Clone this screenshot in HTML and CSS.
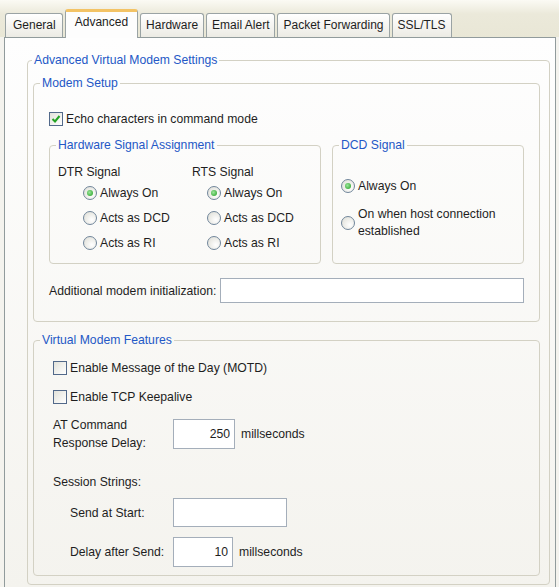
FILE: index.html
```html
<!DOCTYPE html>
<html lang="en">
<head>
  <meta charset="UTF-8" />
  <title>Advanced</title>
  <link rel="stylesheet" href="styles.css">
</head>
<body>

  <div class="tabs">
    <div class="tab">General</div>
    <div class="tab active">Advanced</div>
    <div class="tab">Hardware</div>
    <div class="tab">Email Alert</div>
    <div class="tab">Packet Forwarding</div>
    <div class="tab">SSL/TLS</div>
  </div>

  <div class="panel">
    <fieldset class="group outer">
      <legend>Advanced Virtual Modem Settings</legend>
      <div class="group-body">

        <fieldset class="group setup">
          <legend>Modem Setup</legend>
          <div class="group-body">

            <div class="check-row">
              <span class="checkbox"><svg width="12" height="12" viewBox="0 0 12 12"><polyline points="2.5,6 5,8.5 9.5,3" fill="none" stroke="#23a323" stroke-width="2"/></svg></span>
              Echo characters in command mode
            </div>

            <div class="signals">
              <fieldset class="group hsa">
                <legend>Hardware Signal Assignment</legend>
                <div class="group-body signal-cols">
                  <div class="signal-col dtr">
                    <div class="col-title">DTR Signal</div>
                    <div class="radio-row"><span class="radio on"></span>Always On</div>
                    <div class="radio-row"><span class="radio"></span>Acts as DCD</div>
                    <div class="radio-row"><span class="radio"></span>Acts as RI</div>
                  </div>
                  <div class="signal-col rts">
                    <div class="col-title">RTS Signal</div>
                    <div class="radio-row"><span class="radio on"></span>Always On</div>
                    <div class="radio-row"><span class="radio"></span>Acts as DCD</div>
                    <div class="radio-row"><span class="radio"></span>Acts as RI</div>
                  </div>
                </div>
              </fieldset>

              <fieldset class="group dcd">
                <legend>DCD Signal</legend>
                <div class="group-body">
                  <div class="radio-row"><span class="radio on"></span>Always On</div>
                  <div class="radio-row wrap"><span class="radio"></span><span>On when host connection<br>established</span></div>
                </div>
              </fieldset>
            </div>

            <div class="init-row">
              <span>Additional modem initialization:</span>
              <input class="field init" type="text" value="">
            </div>
          </div>
        </fieldset>

        <fieldset class="group features">
          <legend>Virtual Modem Features</legend>
          <div class="group-body">

            <div class="check-row"><span class="checkbox"></span>Enable Message of the Day (MOTD)</div>
            <div class="check-row keepalive"><span class="checkbox"></span>Enable TCP Keepalive</div>

            <div class="value-row at-row">
              <span class="value-label">AT Command<br>Response Delay:</span>
              <input class="field delay" type="text" value="250">
              <span class="unit">millseconds</span>
            </div>

            <div class="session-title">Session Strings:</div>

            <div class="value-row session send">
              <span class="value-label">Send at Start:</span>
              <input class="field start" type="text" value="">
            </div>

            <div class="value-row session after">
              <span class="value-label">Delay after Send:</span>
              <input class="field short" type="text" value="10">
              <span class="unit">millseconds</span>
            </div>
          </div>
        </fieldset>
      </div>
    </fieldset>
  </div>

</body>
</html>
```

FILE: styles.css
```css
body {
  margin: 0;
  background: #f4f3ee;
  font-family: "Liberation Sans", Arial, sans-serif;
  font-size: 12.2px;
  color: #1e1e1e;
}

/* tab strip */
.tabs {
  display: flex;
  align-items: flex-end;
  height: 37px;
  padding-left: 5px;
  gap: 2px;
  background: linear-gradient(#fbfaf4, #ebe9da 14px, #e9e7d6);
}

.tab {
  height: 23px;
  line-height: 23px;
  padding: 0 5px;
  border: 1px solid #9aa3a4;
  border-bottom: none;
  border-radius: 3px 3px 0 0;
  background: linear-gradient(#ffffff, #ecebe4);
  font-size: 12px;
}

.tab:first-child {
  padding: 0 6px 0 7px;
}

.tab.active {
  position: relative;
  z-index: 1;
  height: 26px;
  line-height: 20px;
  padding: 0 9px;
  margin-bottom: -1px;
  border-top: 3px solid #f3c365;
  background: #fdfdfd;
}

/* tab page */
.panel {
  margin: 0 3px 0 4px;
  padding: 14px 5px 2px 22px;
  border: 1px solid #919b9c;
  background: linear-gradient(#fefefe, #f4f3ee);
}

.group {
  margin: 0;
  padding: 0;
  min-width: 0;
  border: 1px solid #d3d1c4;
  border-radius: 4px;
}

.group legend {
  margin-left: 6px;
  padding: 0 2px;
  line-height: 16px;
  color: #2458c6;
}

.outer > legend {
  margin-left: 4px;
}

.outer > .group-body {
  padding: 7px 9px 8px 5px;
}

.setup > .group-body {
  padding: 20px 15px 18px 15px;
}

.features {
  margin-top: 10px;
}

.features > .group-body {
  padding: 12px 15px 8px 19px;
}

/* checkboxes and radios */
.check-row {
  display: flex;
  align-items: center;
  height: 16px;
}

.keepalive {
  margin-top: 13px;
}

.checkbox {
  flex: none;
  display: flex;
  align-items: center;
  justify-content: center;
  width: 12px;
  height: 12px;
  margin-right: 3px;
  border: 1px solid #52698a;
  background: linear-gradient(135deg, #e2e2da, #ffffff);
}

.radio-row {
  display: flex;
  align-items: center;
  height: 25px;
}

.radio {
  flex: none;
  display: flex;
  align-items: center;
  justify-content: center;
  width: 12px;
  height: 12px;
  margin-right: 3px;
  border: 1px solid #71869b;
  border-radius: 50%;
  background: radial-gradient(circle at 65% 65%, #ffffff, #dcdcd4);
}

.radio.on::after {
  content: "";
  width: 6px;
  height: 6px;
  border-radius: 50%;
  background: radial-gradient(circle at 40% 40%, #9be69b, #1f9d1f);
}

/* signal boxes */
.signals {
  display: flex;
  gap: 11px;
  margin-top: 10px;
}

.hsa {
  flex: none;
  width: 270px;
}

.signal-cols {
  display: flex;
  padding: 11px 0 8px 8px;
}

.signal-col.dtr {
  width: 134px;
}

.col-title {
  line-height: 16px;
}

.dtr .radio-row {
  padding-left: 25px;
}

.rts .radio-row {
  padding-left: 15px;
}

.dcd {
  flex: 1;
}

.dcd > .group-body {
  padding: 20px 8px 8px 8px;
}

.dcd .wrap {
  height: auto;
  margin-top: 8px;
  line-height: 17px;
}

/* text fields */
.init-row {
  display: flex;
  align-items: center;
  margin-top: 14px;
  white-space: nowrap;
}

.field {
  box-sizing: border-box;
  height: 25px;
  padding: 0 4px;
  border: 1px solid #a4aeba;
  background: #fff;
  font: inherit;
  color: #1e1e1e;
  text-align: right;
}

.field.init {
  width: 304px;
  margin-left: auto;
}

.value-row {
  display: flex;
  align-items: center;
}

.value-label {
  width: 120px;
  line-height: 18px;
}

.at-row {
  margin-top: 11px;
}

.field.delay {
  width: 62px;
  height: 30px;
}

.field.start {
  width: 114px;
  height: 29px;
}

.field.short {
  width: 60px;
  height: 30px;
}

.unit {
  margin-left: 6px;
}

.session-title {
  margin-top: 22px;
  line-height: 16px;
}

.session .value-label {
  width: 103px;
  padding-left: 17px;
}

.send {
  margin-top: 8px;
}

.after {
  margin-top: 10px;
}
```
